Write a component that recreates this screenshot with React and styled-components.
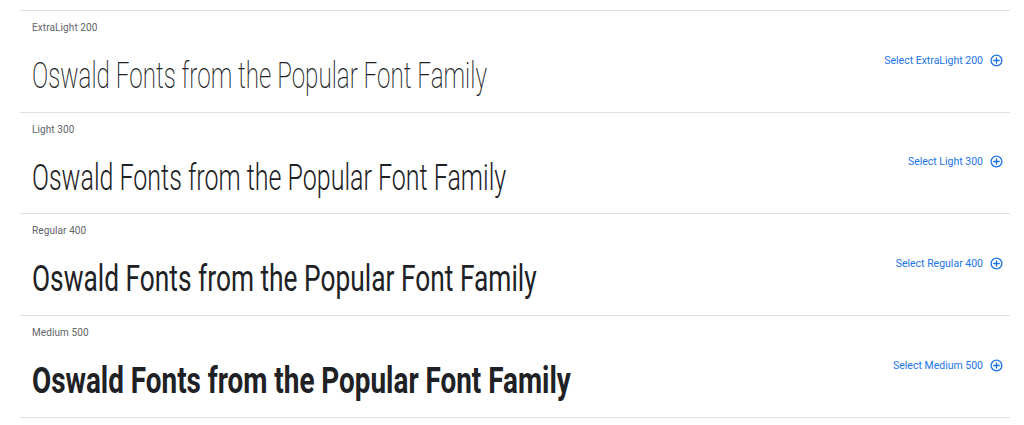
import React, { useLayoutEffect, useRef, useState } from "react";
import styled, { createGlobalStyle } from "styled-components";

const GlobalStyle = createGlobalStyle`
  html, body { margin: 0; padding: 0; background: #ffffff; }
  body { font-family: Roboto, "Noto Sans", Arial, sans-serif; }
`;

const Page = styled.div`
  padding: 10px 0 0 20px;
  width: 990px;
`;

const List = styled.div`
  border-top: 1px solid #e0e0e0;
`;

const Row = styled.div`
  display: flex;
  align-items: center;
  justify-content: space-between;
  border-bottom: 1px solid #e0e0e0;
  padding: 10px 7px 13.7px 12px;
`;

const Info = styled.div`
  display: flex;
  flex-direction: column;
  min-width: 0;
`;

const Label = styled.div`
  font-family: Roboto, Arial, sans-serif;
  font-size: 10px;
  line-height: 14px;
  color: #5f6368;
  letter-spacing: 0.1px;
`;

const SampleBox = styled.div`
  margin-top: 19px;
  height: 44px;
  white-space: nowrap;
`;

const Sample = styled.span`
  display: inline-block;
  font-family: Roboto, "Liberation Sans", Arial, sans-serif;
  font-size: 37px;
  line-height: 44px;
  font-weight: ${(p) => p.$weight};
  color: #202124;
  transform-origin: left center;
  white-space: nowrap;
`;

const SelectButton = styled.button`
  display: flex;
  align-items: center;
  gap: 7px;
  border: none;
  background: transparent;
  padding: 0;
  margin-top: 1px;
  cursor: pointer;
  font-family: Roboto, Arial, sans-serif;
  font-size: 10.5px;
  font-weight: 400;
  color: #1a73e8;
  letter-spacing: 0;
`;

const PlusIcon = () => (
  <svg width="13" height="13" viewBox="0 0 24 24" fill="none" stroke="#1a73e8" strokeWidth="2.4" strokeLinecap="round">
    <circle cx="12" cy="12" r="10" />
    <line x1="12" y1="7" x2="12" y2="17" />
    <line x1="7" y1="12" x2="17" y2="12" />
  </svg>
);

const styles = [
  { name: "ExtraLight 200", weight: 200, width: 455 },
  { name: "Light 300", weight: 300, width: 474 },
  { name: "Regular 400", weight: 400, width: 505 },
  { name: "Medium 500", weight: 700, width: 539 },
];

const TEXT = "Oswald Fonts from the Popular Font Family";

function FittedSample({ weight, width }) {
  const ref = useRef(null);
  const [scale, setScale] = useState(1);
  useLayoutEffect(() => {
    if (ref.current) {
      const w = ref.current.offsetWidth;
      if (w) setScale(width / w);
    }
  }, [width]);
  return (
    <Sample ref={ref} $weight={weight} style={{ transform: `scaleX(${scale})` }}>
      {TEXT}
    </Sample>
  );
}

export default function App() {
  return (
    <>
      <GlobalStyle />
      <Page>
        <List>
          {styles.map((s) => (
            <Row key={s.name}>
              <Info>
                <Label>{s.name}</Label>
                <SampleBox>
                  <FittedSample weight={s.weight} width={s.width} />
                </SampleBox>
              </Info>
              <SelectButton>
                Select {s.name}
                <PlusIcon />
              </SelectButton>
            </Row>
          ))}
        </List>
      </Page>
    </>
  );
}
